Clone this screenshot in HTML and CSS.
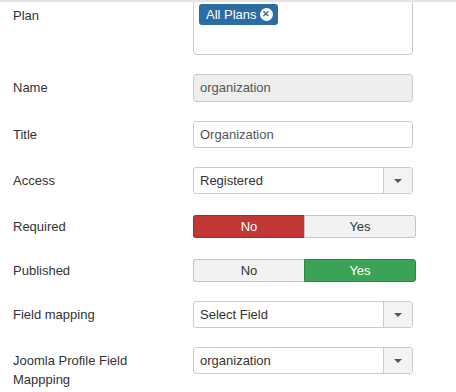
FILE: index.html
```html
<!DOCTYPE html>
<html lang="en">
<head>
    <meta charset="UTF-8">
    <meta name="viewport" content="width=device-width, initial-scale=1.0">
    <title>Field settings</title>
    <link rel="stylesheet" href="styles.css">
</head>
<body>
    <div class="form">
        <div class="control-group">
            <div class="control-label">Plan</div>
            <div class="controls">
                <div class="tag-box">
                    <span class="tag">All Plans <span class="tag-remove">&#x2715;</span></span>
                </div>
            </div>
        </div>

        <div class="control-group">
            <div class="control-label">Name</div>
            <div class="controls">
                <div class="input readonly">organization</div>
            </div>
        </div>

        <div class="control-group">
            <div class="control-label">Title</div>
            <div class="controls">
                <div class="input">Organization</div>
            </div>
        </div>

        <div class="control-group">
            <div class="control-label">Access</div>
            <div class="controls">
                <div class="select">
                    <span class="select-value">Registered</span>
                    <span class="select-arrow"><b></b></span>
                </div>
            </div>
        </div>

        <div class="control-group switch-row">
            <div class="control-label">Required</div>
            <div class="controls">
                <div class="switch">
                    <span class="switch-btn active-no">No</span>
                    <span class="switch-btn">Yes</span>
                </div>
            </div>
        </div>

        <div class="control-group switch-row">
            <div class="control-label">Published</div>
            <div class="controls">
                <div class="switch">
                    <span class="switch-btn">No</span>
                    <span class="switch-btn active-yes">Yes</span>
                </div>
            </div>
        </div>

        <div class="control-group">
            <div class="control-label">Field mapping</div>
            <div class="controls">
                <div class="select">
                    <span class="select-value">Select Field</span>
                    <span class="select-arrow"><b></b></span>
                </div>
            </div>
        </div>

        <div class="control-group">
            <div class="control-label">Joomla Profile Field Mappping</div>
            <div class="controls">
                <div class="select">
                    <span class="select-value">organization</span>
                    <span class="select-arrow"><b></b></span>
                </div>
            </div>
        </div>
    </div>
</body>
</html>
```

FILE: styles.css
```css
body {
    margin: 0;
    font-family: 'Liberation Sans', Arial, sans-serif;
    font-size: 13px;
    color: #333;
    background: #fff;
    border-top: 2px solid #e4e4e4;
}

.form {
    padding-left: 13px;
}

.control-group {
    display: flex;
    margin-bottom: 19px;
}

.control-label {
    width: 180px;
    box-sizing: border-box;
    padding: 4px 30px 0 0;
    line-height: 19px;
}

.controls {
    width: 220px;
}

.tag-box {
    height: 53px;
    box-sizing: border-box;
    border: 1px solid #ccc;
    border-top: none;
    border-radius: 0 0 4px 4px;
    padding: 2px 5px;
}

.tag {
    display: inline-flex;
    align-items: center;
    height: 21px;
    padding: 0 5px 0 7px;
    background-color: #2b6ca3;
    color: #fff;
    border-radius: 3px;
    line-height: 21px;
}

.tag-remove {
    display: inline-flex;
    justify-content: center;
    align-items: center;
    width: 13px;
    height: 13px;
    margin-left: 3px;
    border-radius: 50%;
    background: #fff;
    color: #2b6ca3;
    font-size: 9px;
    font-weight: bold;
    line-height: 1;
}

.input {
    height: 27px;
    box-sizing: border-box;
    border: 1px solid #ccc;
    border-radius: 3px;
    padding: 0 6px;
    line-height: 25px;
    color: #555;
}

.input.readonly {
    height: 28px;
    line-height: 26px;
    background-color: #eee;
}

.select {
    display: flex;
    height: 27px;
    box-sizing: border-box;
    border: 1px solid #ccc;
    border-radius: 3px;
    line-height: 25px;
    overflow: hidden;
}

.select-value {
    flex: 1;
    padding: 0 6px;
    color: #333;
}

.select-arrow {
    width: 28px;
    border-left: 1px solid #ccc;
    background-color: #f3f3f3;
    display: flex;
    justify-content: center;
    align-items: center;
}

.select-arrow b {
    width: 0;
    height: 0;
    border-left: 4px solid transparent;
    border-right: 4px solid transparent;
    border-top: 4px solid #555;
}

.switch-row .controls {
    width: 223px;
    padding-top: 2px;
}

.switch {
    display: flex;
    height: 23px;
}

.switch-btn {
    flex: 1;
    text-align: center;
    line-height: 21px;
    background-color: #f2f2f2;
    border: 1px solid #c4c4c4;
    color: #333;
}

.switch-btn:first-child {
    border-radius: 3px 0 0 3px;
    border-right: none;
}

.switch-btn:last-child {
    border-radius: 0 3px 3px 0;
}

.active-no {
    background-color: #c23735;
    border-color: #a52c2a;
    color: #fff;
}

.active-yes {
    background-color: #3ba357;
    border-color: #2e8745;
    color: #fff;
}
```
